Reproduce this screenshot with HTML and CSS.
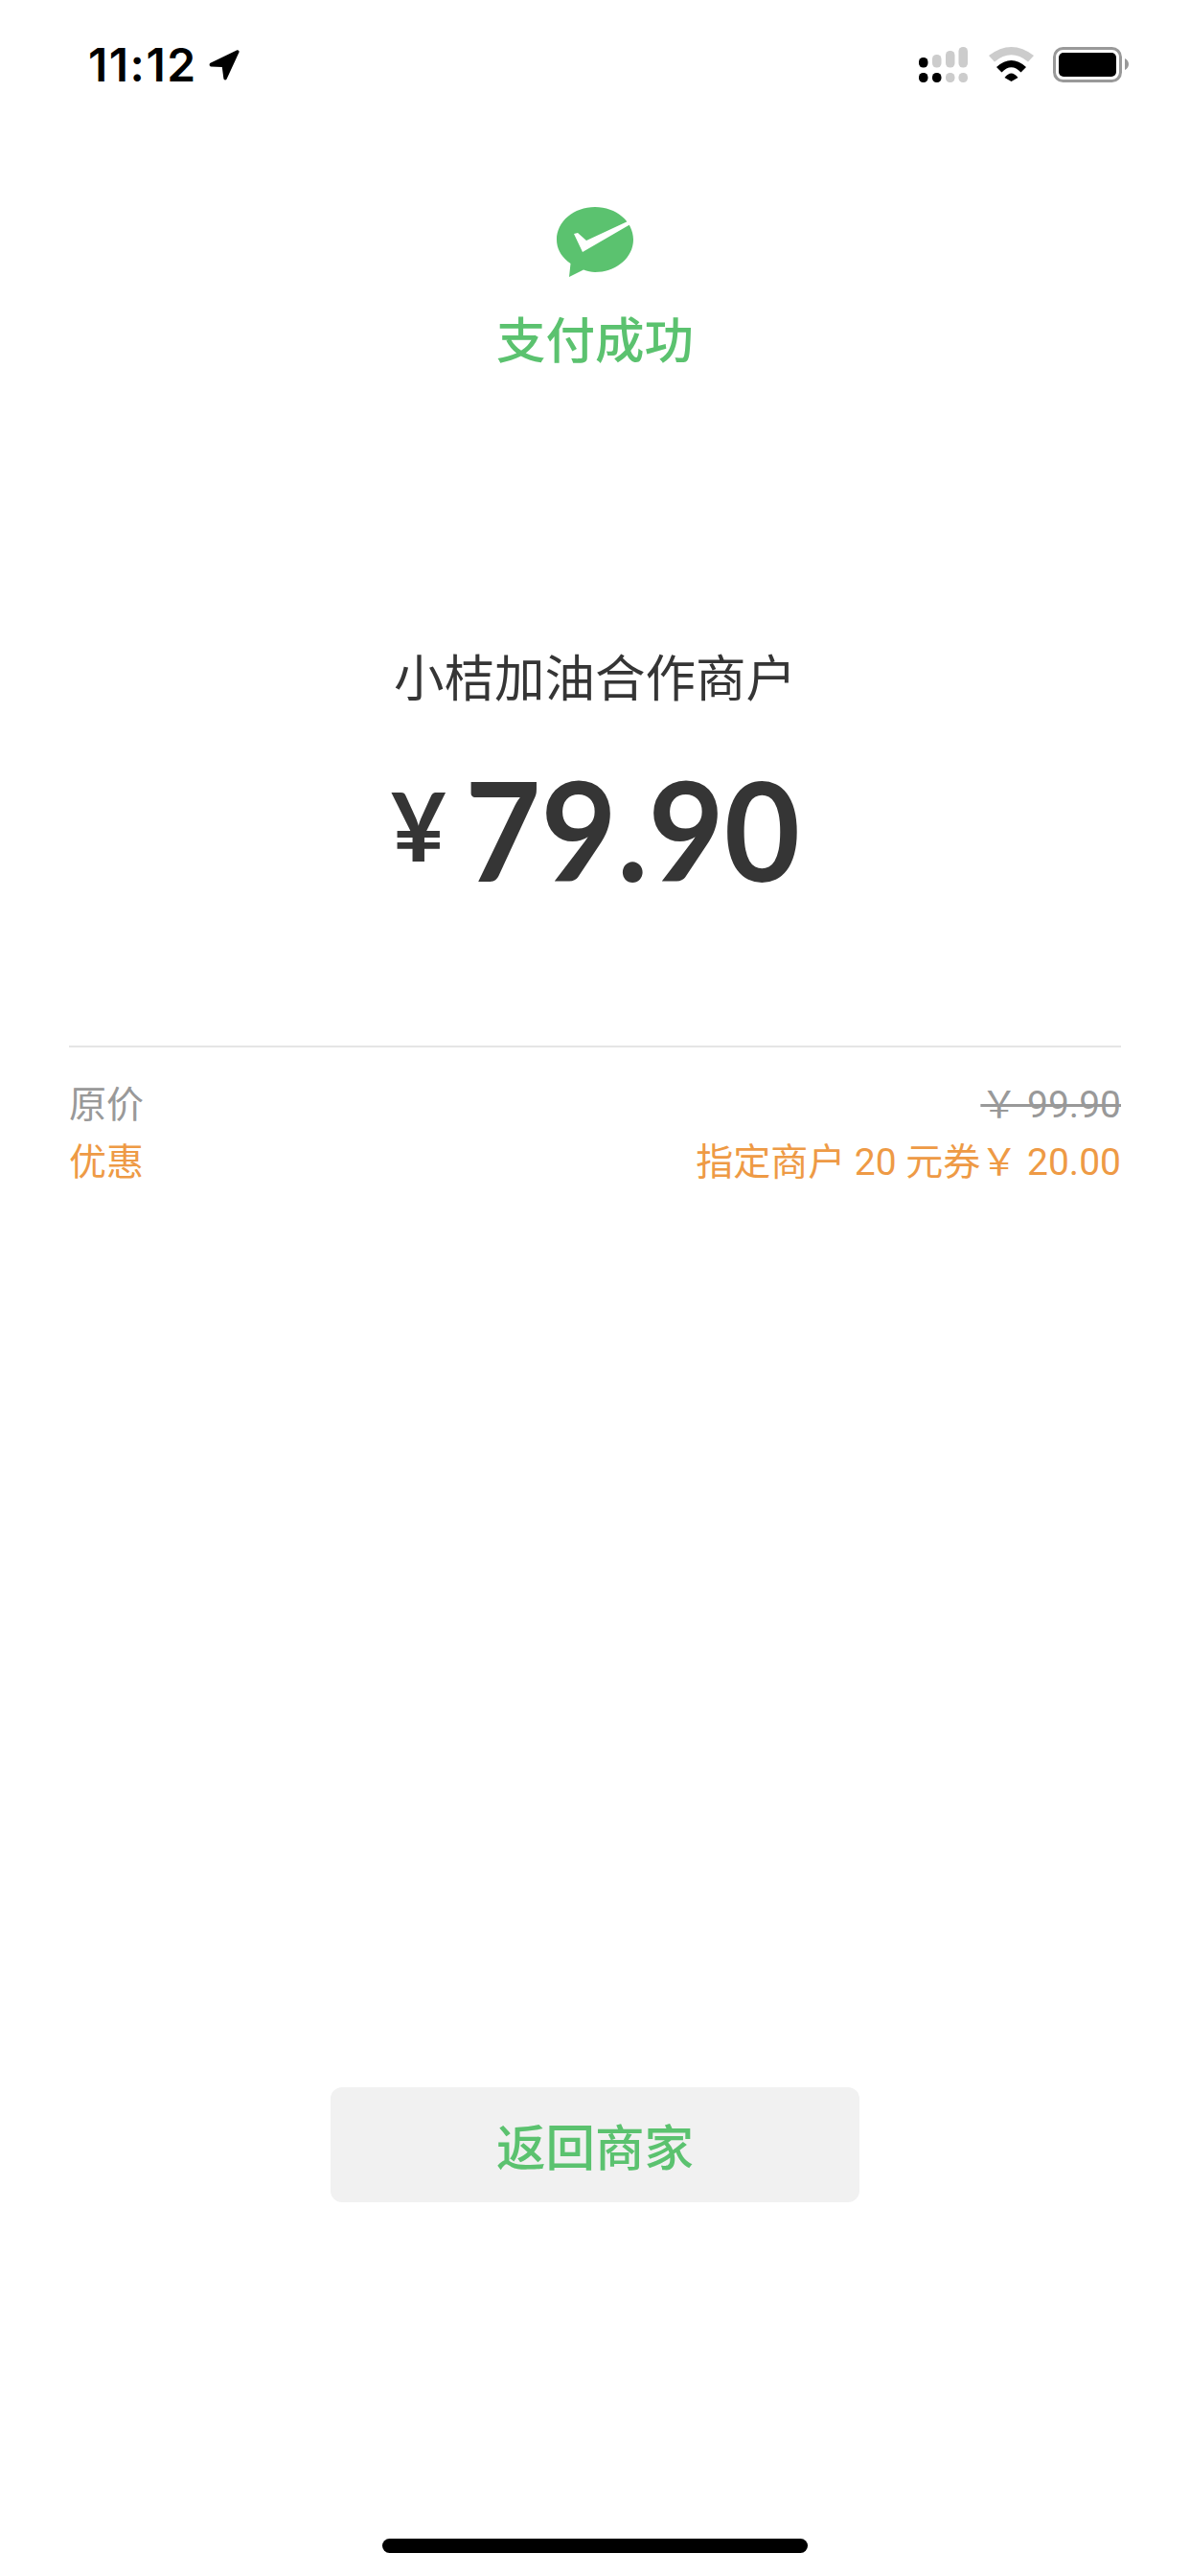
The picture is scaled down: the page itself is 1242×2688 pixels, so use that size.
FILE: index.html
```html
<!DOCTYPE html>
<html lang="zh-CN">
<head>
  <meta charset="UTF-8" />
  <meta name="viewport" content="width=device-width, initial-scale=1.0" />
  <title>支付成功</title>
  <link rel="stylesheet" href="styles.css">
</head>
<body>
  <div class="status-bar">
    <div class="status-left">
      <span class="time">11:12</span>
      <svg class="loc-icon" viewBox="0 0 32 32"><path d="M1.500 13.800 29 .4c1.600-.8 3.200.8 2.400 2.400L18.600 30.500c-.7 1.500-3 1.300-3.200-.4L13.800 18 2.200 17.500c-1.700-.1-2.200-2.900-.7-3.700z" /></svg>
    </div>
    <div class="status-right">
      <svg class="signal-icon" viewBox="0 0 51 37">
        <rect class="on" x="0" y="11" width="9.500" height="10.500" rx="4.500" />
        <rect class="off" x="14" y="8" width="9.500" height="13.500" rx="4.500" />
        <rect class="off" x="28" y="4" width="9.500" height="17.500" rx="4.500" />
        <rect class="off" x="41.500" y="0" width="9.500" height="21.500" rx="4.500" />
        <rect class="on" x="0" y="27" width="9.500" height="10" rx="4.500" />
        <rect class="on" x="14" y="27" width="9.500" height="10" rx="4.500" />
        <rect class="off" x="28" y="27" width="9.500" height="10" rx="4.500" />
        <rect class="off" x="41.500" y="27" width="9.500" height="10" rx="4.500" />
      </svg>
      <svg class="wifi-icon" viewBox="0 0 47 36">
        <path class="off" d="M0 9Q23.500-9 47 9L41 15.500Q23.500 1 6 15.500Z" />
        <path class="on" d="M8 21Q23.500 7 39 21L33.500 26.500Q23.500 16 13.500 26.500Z" />
        <path class="on" d="M16.500 32Q23.500 23 30.500 32L23.500 36Z" />
      </svg>
      <svg class="battery-icon" viewBox="0 0 79 37">
        <rect class="batt-border" x="1.500" y="1.500" width="69" height="34" rx="9" />
        <rect class="on" x="6" y="6" width="60" height="25" rx="5" />
        <path class="batt-nub" d="M75 12c2.500 1 4 3.500 4 6s-1.500 5-4 6z" />
      </svg>
    </div>
  </div>

  <div class="result">
    <svg class="pay-logo" viewBox="0 0 80 73">
      <path class="logo-bubble" d="M40 0C17.900 0 0 15.200 0 34c0 9.400 4.500 17.900 14.500 25L13 73l15-7.500C32 67 36 68 40 68c22.100 0 40-15.200 40-34S62.100 0 40 0z" />
      <path class="logo-check" d="M18 28l4-1 9 8 43-20 3 3-50 29z" />
    </svg>
    <div class="result-title">支付成功</div>
  </div>

  <div class="merchant">小桔加油合作商户</div>
  <div class="amount"><span class="amount-sign">¥</span><span class="amount-num">79.90</span></div>

  <div class="details">
    <div class="row row-gray">
      <span>原价</span>
      <span class="old-price">￥ 99.90</span>
    </div>
    <div class="row row-orange">
      <span>优惠</span>
      <span>指定商户 20 元券￥ 20.00</span>
    </div>
  </div>

  <button class="back-btn">返回商家</button>
  <div class="home-bar"></div>
</body>
</html>
```

FILE: styles.css
```css
* {
  margin: 0;
  padding: 0;
  box-sizing: border-box;
}

body {
  font-family: Roboto, "Noto Sans CJK SC", sans-serif;
  background: white;
  width: 1242px;
  height: 2688px;
  display: flex;
  flex-direction: column;
  overflow: hidden;
}

.on { fill: black; }
.off { fill: #cccccc; }

.status-bar {
  height: 132px;
  padding: 49px 64px 0 92px;
  display: flex;
  justify-content: space-between;
  align-items: flex-start;
}

.status-left {
  display: flex;
  align-items: center;
  gap: 12px;
}

.time {
  font-family: Inter, sans-serif;
  font-size: 48px;
  line-height: 37px;
  font-weight: 600;
  letter-spacing: 1.5px;
  color: black;
}

.loc-icon {
  width: 32px;
  height: 32px;
  fill: black;
}

.status-right {
  display: flex;
  align-items: flex-start;
  gap: 22px;
}

.signal-icon { width: 51px; height: 37px; }
.wifi-icon { width: 47px; height: 36px; margin-right: -2px; }
.battery-icon { width: 79px; height: 37px; }

.batt-border {
  fill: none;
  stroke: #999999;
  stroke-width: 3;
}

.batt-nub { fill: #999999; }

.result {
  margin-top: 84px;
  display: flex;
  flex-direction: column;
  align-items: center;
}

.pay-logo {
  width: 80px;
  height: 73px;
}

.logo-bubble { fill: #5bc26f; }
.logo-check { fill: white; }

.result-title {
  margin-top: 33px;
  font-size: 51.5px;
  line-height: 70px;
  font-weight: 500;
  color: #5bc26f;
}

.merchant {
  margin-top: 282px;
  text-align: center;
  font-size: 52.5px;
  line-height: 70px;
  color: #353535;
}

.amount {
  margin-top: 46px;
  padding-left: 10px;
  height: 150px;
  display: flex;
  justify-content: center;
  align-items: center;
  gap: 10px;
  color: #353535;
  font-family: Lato, sans-serif;
  font-weight: 700;
}

.amount-sign {
  font-size: 100px;
  line-height: 100px;
  margin-bottom: 10px;
}

/* lato is wider than the reference's digits, so squeeze it */
.amount-num {
  display: inline-block;
  font-size: 144px;
  line-height: 150px;
  font-kerning: none;
  transform: scaleX(0.95);
}

.details {
  margin: 151px 72px 0;
  padding-top: 30px;
  border-top: 2px solid #e5e5e5;
}

.row {
  display: flex;
  justify-content: space-between;
  font-size: 39px;
  line-height: 60px;
}

.row-gray { color: #999999; }
.row-orange { color: #ee9a45; }

.old-price {
  text-decoration: line-through;
}

.back-btn {
  margin: auto auto 0;
  padding-bottom: 2px;
  width: 552px;
  height: 120px;
  background: #f1f1f1;
  border: none;
  border-radius: 12px;
  font-family: inherit;
  font-size: 51.5px;
  font-weight: 500;
  color: #5bc26f;
}

.home-bar {
  margin: 351px auto 24px;
  width: 444px;
  height: 15px;
  border-radius: 8px;
  background: black;
}
```
